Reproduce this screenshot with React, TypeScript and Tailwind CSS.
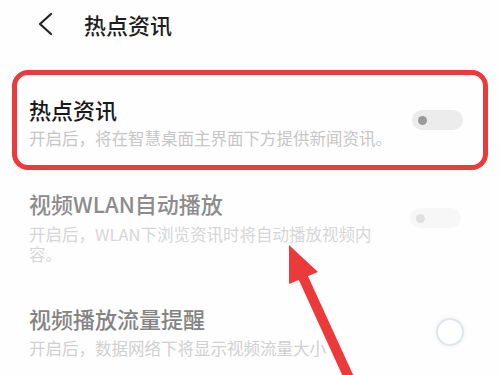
import React from 'react';

const font = { fontFamily: '"Noto Sans CJK SC", "Noto Sans", sans-serif' };

function Toggle({ faded }: { faded?: boolean }) {
  return (
    <div
      className={`w-[51px] h-[20px] rounded-full flex items-center pl-[6px] shrink-0 ${
        faded ? 'bg-[#f7f7f7]' : 'bg-[#ececec]'
      }`}
    >
      <div className={`w-[9px] h-[9px] rounded-full ${faded ? 'bg-[#e0e0e0]' : 'bg-[#9a9a9a]'}`} />
    </div>
  );
}

export default function App() {
  return (
    <div className="relative w-[500px] h-[375px] overflow-hidden bg-[#fefefe]" style={font}>
      <div className="flex items-center h-[48px] pl-[36px]">
        <svg width="18" height="24" viewBox="0 0 18 24" className="mr-[30px]">
          <path d="M15 2 L4 12 L15 22" fill="none" stroke="#222" strokeWidth="2.2" strokeLinecap="round" strokeLinejoin="round" />
        </svg>
        <span className="text-[22px] font-medium text-[#1e1e1e] leading-none">热点资讯</span>
      </div>

      <div className="mt-[22px] mx-[12px] h-[100px] rounded-[16px] border-[5px] border-[#ea3a3b] flex items-center pl-[12px] pr-[20px]">
        <div className="flex-1 pt-[4px]">
          <div className="text-[22px] font-medium leading-[26px] text-[#1a1a1a]">热点资讯</div>
          <div className="text-[16.5px] leading-[22px] mt-[5px] text-[#c6c6c6]">
            开启后，将在智慧桌面主界面下方提供新闻资讯。
          </div>
        </div>
        <Toggle />
      </div>

      <div className="flex items-start pl-[29px] pr-[39px] pt-[20px]">
        <div className="w-[356px]">
          <div className="text-[22px] font-medium leading-[26px] text-[#8c8c8c]">视频WLAN自动播放</div>
          <div className="text-[16.5px] leading-[20px] mt-[8px] text-[#d6d6d6]">
            开启后，WLAN下浏览资讯时将自动播放视频内容。
          </div>
        </div>
        <div className="ml-auto mt-[18px]">
          <Toggle faded />
        </div>
      </div>

      <div className="flex items-center pl-[29px] pr-[36px] mt-[41px]">
        <div className="flex-1">
          <div className="text-[22px] font-medium leading-[26px] text-[#848484]">视频播放流量提醒</div>
          <div className="text-[16.5px] leading-[21px] mt-[7px] text-[#d0d0d0]">
            开启后，数据网络下将显示视频流量大小
          </div>
        </div>
        <div className="w-[28px] h-[28px] rounded-full border-[2px] border-[#dfe6ea] bg-white shadow-[0_0_6px_rgba(0,0,0,0.06)]" />
      </div>

      <svg className="absolute left-0 top-0" width="500" height="375" viewBox="0 0 500 375">
        <polygon points="289,245 289,284 318,272" fill="#ec3a3b" />
        <line x1="302" y1="275" x2="350" y2="380" stroke="#ec3a3b" strokeWidth="10" />
      </svg>
    </div>
  );
}
